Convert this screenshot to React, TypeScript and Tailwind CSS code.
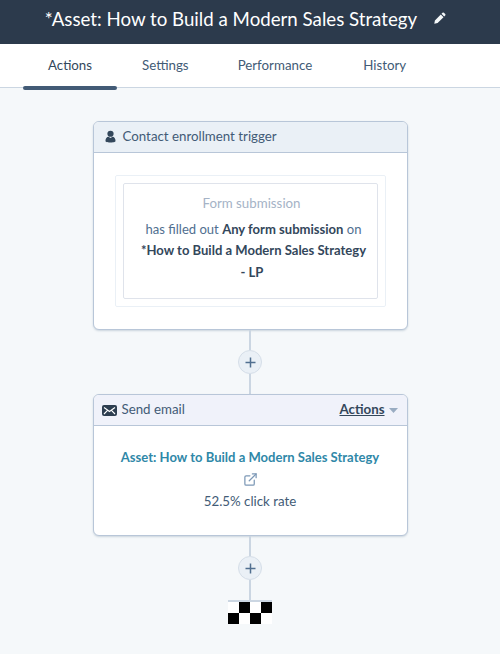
import { ExternalLink } from "lucide-react";

const font = { fontFamily: '"Lato", "Open Sans", sans-serif' };

const PlusNode = () => (
  <div className="flex flex-col items-center">
    <div className="w-[2px] h-[20px] bg-[#cbd6e2]" />
    <button className="flex h-[24px] w-[24px] items-center justify-center rounded-full border border-[#d5dee8] bg-[#eaf0f6]">
      <svg width="11" height="11" viewBox="0 0 11 11">
        <path d="M5.5 0.5v10M0.5 5.5h10" stroke="#516f90" strokeWidth="1.5" />
      </svg>
    </button>
    <div className="w-[2px] h-[20px] bg-[#cbd6e2]" />
  </div>
);

export default function App() {
  return (
    <div className="flex h-[654px] w-[500px] flex-col overflow-hidden bg-[#f5f8fa] text-[#33475b]" style={font}>
      <header className="flex h-[44px] items-center justify-center gap-[17px] bg-[#2c3a4c] pr-[9px] pb-[6px] text-white">
        <h1 className="text-[18.7px] leading-none">*Asset: How to Build a Modern Sales Strategy</h1>
        <svg width="12" height="12" viewBox="0 0 12 12" fill="#f5f8fa" className="mb-[2px]">
          <path d="M0.3 11.7l0.6-3.3 5.9-5.9 2.7 2.7-5.9 5.9zM7.5 1.8l1-1a1 1 0 0 1 1.4 0l1.3 1.3a1 1 0 0 1 0 1.4l-1 1z" />
        </svg>
      </header>

      <nav className="flex h-[44px] border-b border-[#cbd6e2] bg-white text-[13.3px] text-[#425b76]">
        <div className="relative ml-[23px] flex w-[94px] items-center justify-center text-[#33475b]">
          Actions
          <div className="absolute -bottom-[3px] left-0 h-[4px] w-[94px] rounded-[2px] bg-[#425b76]" />
        </div>
        <div className="ml-[25px] flex items-center">Settings</div>
        <div className="ml-[49px] flex items-center">Performance</div>
        <div className="ml-[51px] flex items-center">History</div>
      </nav>

      <main className="flex flex-col items-center pt-[33px]">
        <section className="w-[315px] overflow-hidden rounded-[6px] border border-[#b8c6d8] bg-white shadow-[0_1px_2px_rgba(80,110,140,0.25)]">
          <div className="flex h-[31px] items-center gap-[7px] border-b border-[#b8c6d8] bg-[#eaf0f6] pb-[1px] pl-[11px] text-[13.3px] text-[#425b76]">
            <svg width="11" height="13" viewBox="0 0 12 14" fill="#33475b">
              <circle cx="6" cy="4" r="3.4" />
              <path d="M0.5 12c0-3 1.5-4.4 3.2-4.6L6 8.6l2.3-1.2c1.7 0.2 3.2 1.6 3.2 4.6 0 0.8-1 1.6-5.5 1.6S0.5 12.8 0.5 12z" />
            </svg>
            Contact enrollment trigger
          </div>
          <div className="px-[21px] py-[22px]">
            <div className="rounded-[2px] border border-[#eaf0f6] p-[7px]">
              <div className="h-[116px] rounded-[2px] border border-[#dfe3eb] pl-[10px] pr-[3px] pt-[9px] text-center text-[13.3px] leading-[21.5px]">
                <p className="pr-[4px] text-[#a5b3c6]">Form submission</p>
                <p className="mt-[4px] text-[13.05px] text-[#516f90]">
                  has filled out <b className="font-bold text-[#33475b]">Any form submission</b> on
                </p>
                <p className="text-[13.05px] font-bold text-[#33475b]">
                  *How to Build a Modern Sales Strategy
                  <span className="block pr-[3px]">- LP</span>
                </p>
              </div>
            </div>
          </div>
        </section>

        <PlusNode />

        <section className="w-[315px] overflow-hidden rounded-[6px] border border-[#b8c6d8] bg-white shadow-[0_1px_2px_rgba(80,110,140,0.25)]">
          <div className="flex h-[31px] items-center border-b border-[#b8c6d8] bg-[#f0f2fa] pl-[8px] pr-[9px] text-[13.3px] text-[#425b76]">
            <svg width="15" height="11" viewBox="0 0 15 11" className="mr-[5px]">
              <rect width="15" height="11" rx="2" fill="#2d3e50" />
              <path d="M2 2.5l5.5 4 5.5-4M2 9l3.3-3.4M13 9l-3.3-3.4" stroke="white" strokeWidth="1.1" fill="none" />
            </svg>
            Send email
            <span className="ml-auto font-bold text-[#33475b] underline">Actions</span>
            <svg width="9" height="5" viewBox="0 0 9 5" className="ml-[4px]"><path d="M0 0h9L4.5 5z" fill="#99acc2" /></svg>
          </div>
          <div className="h-[109px] pt-[20px] text-center text-[13.05px] leading-[22px]">
            <p className="font-bold text-[#2f88a8]">Asset: How to Build a Modern Sales Strategy</p>
            <div className="flex h-[22px] items-center justify-center">
              <ExternalLink size={15} color="#7c98b6" strokeWidth={2} />
            </div>
            <p className="text-[13.3px] text-[#425b76]">52.5% click rate</p>
          </div>
        </section>

        <PlusNode />

        <div className="grid w-[44px] grid-cols-4 border-t-2 border-[#cbd6e2]">
          {[0, 1, 0, 1, 1, 0, 1, 0].map((black, i) => (
            <div key={i} className={black ? "h-[11px] bg-black" : "h-[11px] bg-white"} />
          ))}
        </div>
      </main>
    </div>
  );
}
